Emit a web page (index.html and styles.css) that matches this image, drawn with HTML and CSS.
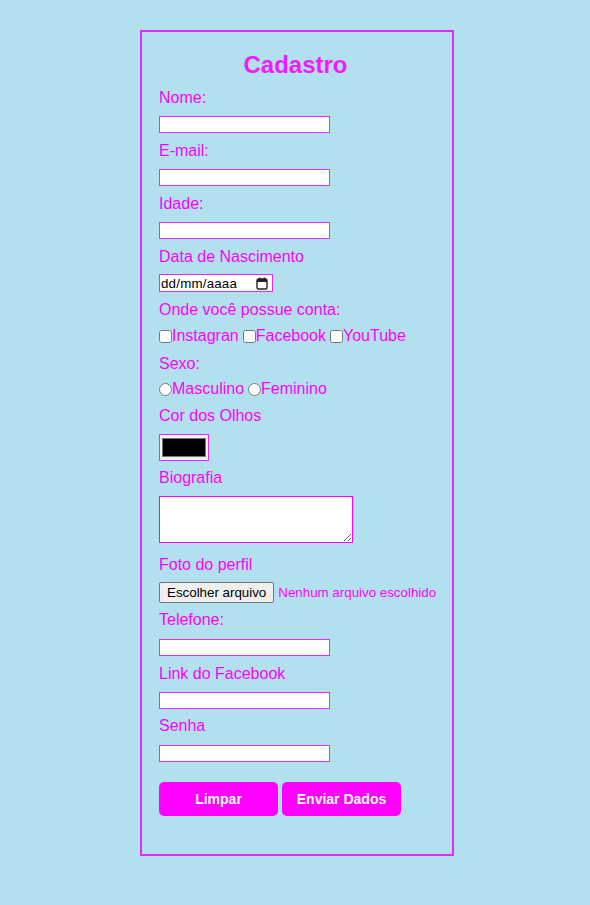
FILE: index.html
```html
<!DOCTYPE html>
<html lang="pt-BR">
<head>
<meta charset="utf-8">
<title>Cadastro</title>
<link rel="stylesheet" href="styles.css">
</head>
<body>
<div class="card">
  <h1 class="title">Cadastro</h1>
  <form class="form">
    <label class="lbl">Nome:</label>
    <input class="txt" type="text">
    <label class="lbl">E-mail:</label>
    <input class="txt" type="text">
    <label class="lbl">Idade:</label>
    <input class="txt" type="text">
    <label class="lbl lbl-8">Data de Nascimento</label>
    <div class="date">
      <span class="date-text">dd/mm/aaaa</span>
      <svg class="cal" width="12" height="13" viewBox="0 0 12 13" aria-hidden="true">
        <rect x="1" y="2" width="10" height="10" rx="1.5" fill="none" stroke="#222" stroke-width="1.4"/>
        <rect x="1" y="2" width="10" height="3" fill="#222"/>
        <rect x="3" y="0.5" width="1.4" height="2.5" fill="#222"/>
        <rect x="7.6" y="0.5" width="1.4" height="2.5" fill="#222"/>
      </svg>
    </div>
    <label class="lbl lbl-8">Onde você possue conta:</label>
    <div class="row row-cb">
      <input class="chk" type="checkbox"><span>Instagran</span>
      <input class="chk sp" type="checkbox"><span>Facebook</span>
      <input class="chk sp" type="checkbox"><span>YouTube</span>
    </div>
    <label class="lbl lbl-7">Sexo:</label>
    <div class="row row-rd">
      <input class="chk" type="radio" name="sexo"><span>Masculino</span>
      <input class="chk sp" type="radio" name="sexo"><span>Feminino</span>
    </div>
    <label class="lbl">Cor dos Olhos</label>
    <input class="color" type="color" value="#000000">
    <label class="lbl">Biografia</label>
    <textarea class="bio"></textarea>
    <label class="lbl lbl-8">Foto do perfil</label>
    <div class="file">
      <button type="button" class="file-btn">Escolher arquivo</button>
      <span class="file-text">Nenhum arquivo escolhido</span>
    </div>
    <label class="lbl lbl-10">Telefone:</label>
    <input class="txt" type="text">
    <label class="lbl">Link do Facebook</label>
    <input class="txt txt-8" type="text">
    <label class="lbl lbl-10">Senha</label>
    <input class="txt" type="password">
    <div class="actions">
      <button type="reset" class="btn">Limpar</button>
      <button type="button" class="btn">Enviar Dados</button>
    </div>
  </form>
</div>
</body>
</html>
```
FILE: styles.css
```css
html, body {
  margin: 0;
  padding: 0;
}
body {
  background: #b2e0ef;
  font-family: "Liberation Sans", Arial, sans-serif;
  display: flex;
  justify-content: center;
  padding: 30px 0 0 4px;
}
.card {
  width: 310px;
  height: 822px;
  border: 2px solid #e22bff;
  box-sizing: content-box;
  padding: 0;
}
.title {
  margin: 19px 0 10px;
  font-size: 24px;
  line-height: 28px;
  font-weight: bold;
  text-align: center;
  color: #f01cff;
  padding-right: 3px;
}
.form {
  display: flex;
  flex-direction: column;
  align-items: flex-start;
  padding: 0 17px;
}
.lbl {
  font-size: 16px;
  line-height: 18px;
  color: #ff00ff;
  margin-bottom: 9px;
}
.lbl-7 { margin-bottom: 7px; }
.lbl-8 { margin-bottom: 8px; }
.lbl-10 { margin-bottom: 10px; }
.txt {
  width: 171px;
  height: 17px;
  box-sizing: border-box;
  border: 1px solid #e22bff;
  background: #fff;
  margin: 0 0 9px;
  padding: 1px 2px;
  font: 13.33px "Liberation Sans", Arial, sans-serif;
  outline: none;
}
.txt-8 { margin-bottom: 8px; }
.date {
  width: 114px;
  height: 18px;
  box-sizing: border-box;
  border: 1px solid #e22bff;
  background: #fff;
  margin: 0 0 9px;
  display: flex;
  align-items: center;
  padding: 0 4px 0 1px;
  font: 13.33px "Liberation Sans", Arial, sans-serif;
  color: #000;
}
.date-text {
  flex: 1;
  letter-spacing: 0.2px;
}
.cal {
  display: block;
}
.row {
  display: flex;
  align-items: center;
  height: 18px;
  font-size: 16px;
  color: #ff00ff;
  margin-bottom: 8px;
  white-space: pre;
}
.row-cb { margin-bottom: 10px; }
.row-rd { margin-bottom: 9px; }
.chk {
  width: 13px;
  height: 13px;
  margin: 0;
}
.chk.sp {
  margin-left: 4px;
}
.color {
  width: 50px;
  height: 27px;
  box-sizing: border-box;
  border: 1px solid #e22bff;
  background: #efefef;
  padding: 1px 2px;
  margin: 0 0 8px;
}
.color::-webkit-color-swatch-wrapper {
  padding: 2px 0;
}
.color::-webkit-color-swatch {
  border: 1px solid #777;
}
.bio {
  width: 194px;
  height: 47px;
  box-sizing: border-box;
  border: 1px solid #ff00ff;
  background: #fff;
  margin: 0 0 13px;
  resize: both;
}
.file {
  display: flex;
  align-items: center;
  margin-bottom: 8px;
  white-space: nowrap;
  width: max-content;
}
.file-btn {
  flex-shrink: 0;
  height: 21px;
  box-sizing: border-box;
  padding: 1px 7px;
  border: 1px solid #767676;
  border-radius: 2px;
  background: #efefef;
  color: #000;
  font: 13.33px "Liberation Sans", Arial, sans-serif;
  margin: 0 4px 0 0;
  white-space: nowrap;
}
.file-text {
  flex-shrink: 0;
  font-size: 13.33px;
  color: #ff00ff;
}
.actions {
  display: flex;
  gap: 4px;
  margin-top: 11px;
}
.btn {
  width: 119px;
  height: 34px;
  border: none;
  border-radius: 5px;
  background: #ff00ff;
  color: #fff;
  font: bold 14px "Liberation Sans", Arial, sans-serif;
  padding: 0;
  cursor: pointer;
}
```
